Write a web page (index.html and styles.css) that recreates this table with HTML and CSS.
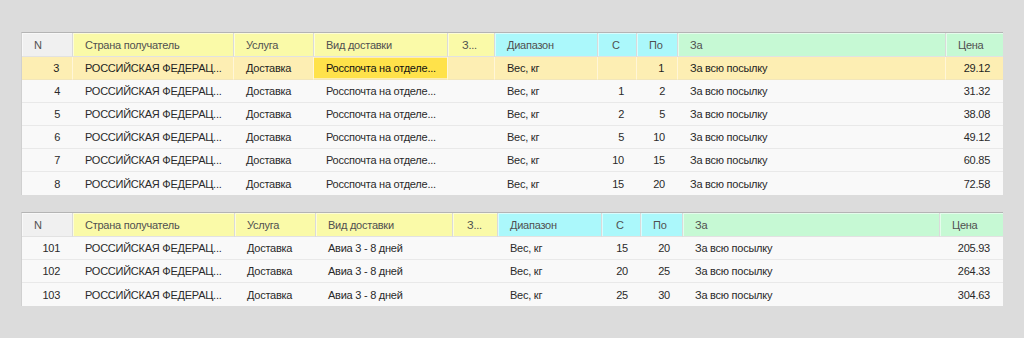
FILE: index.html
```html
<!DOCTYPE html>
<html lang="ru">
<head>
<meta charset="utf-8">
<title>Тарифы</title>
<link rel="stylesheet" href="styles.css">
</head>
<body>
<div class="page">
  <table class="grid">
    <colgroup>
      <col style="width:51px"><col style="width:161px"><col style="width:80px"><col style="width:134px"><col style="width:47px"><col style="width:103px"><col style="width:39px"><col style="width:41px"><col style="width:268px"><col style="width:57px">
    </colgroup>
    <thead>
      <tr>
        <th class="h-grey">N</th>
        <th class="h-yellow">Страна получатель</th>
        <th class="h-yellow">Услуга</th>
        <th class="h-yellow">Вид доставки</th>
        <th class="h-yellow h-short">З...</th>
        <th class="h-cyan">Диапазон</th>
        <th class="h-cyan h-short">С</th>
        <th class="h-cyan">По</th>
        <th class="h-green">За</th>
        <th class="h-green">Цена</th>
      </tr>
    </thead>
    <tbody>
      <tr class="current">
        <td class="num">3</td><td>РОССИЙСКАЯ ФЕДЕРАЦ...</td><td>Доставка</td><td class="focus">Росспочта на отделе...</td><td></td><td>Вес, кг</td><td class="num"></td><td class="num">1</td><td>За всю посылку</td><td class="num">29.12</td>
      </tr>
      <tr>
        <td class="num">4</td><td>РОССИЙСКАЯ ФЕДЕРАЦ...</td><td>Доставка</td><td>Росспочта на отделе...</td><td></td><td>Вес, кг</td><td class="num">1</td><td class="num">2</td><td>За всю посылку</td><td class="num">31.32</td>
      </tr>
      <tr>
        <td class="num">5</td><td>РОССИЙСКАЯ ФЕДЕРАЦ...</td><td>Доставка</td><td>Росспочта на отделе...</td><td></td><td>Вес, кг</td><td class="num">2</td><td class="num">5</td><td>За всю посылку</td><td class="num">38.08</td>
      </tr>
      <tr>
        <td class="num">6</td><td>РОССИЙСКАЯ ФЕДЕРАЦ...</td><td>Доставка</td><td>Росспочта на отделе...</td><td></td><td>Вес, кг</td><td class="num">5</td><td class="num">10</td><td>За всю посылку</td><td class="num">49.12</td>
      </tr>
      <tr>
        <td class="num">7</td><td>РОССИЙСКАЯ ФЕДЕРАЦ...</td><td>Доставка</td><td>Росспочта на отделе...</td><td></td><td>Вес, кг</td><td class="num">10</td><td class="num">15</td><td>За всю посылку</td><td class="num">60.85</td>
      </tr>
      <tr>
        <td class="num">8</td><td>РОССИЙСКАЯ ФЕДЕРАЦ...</td><td>Доставка</td><td>Росспочта на отделе...</td><td></td><td>Вес, кг</td><td class="num">15</td><td class="num">20</td><td>За всю посылку</td><td class="num">72.58</td>
      </tr>
    </tbody>
  </table>

  <table class="grid second">
    <colgroup>
      <col style="width:51px"><col style="width:162px"><col style="width:81px"><col style="width:137px"><col style="width:45px"><col style="width:104px"><col style="width:39px"><col style="width:42px"><col style="width:257px"><col style="width:63px">
    </colgroup>
    <thead>
      <tr>
        <th class="h-grey">N</th>
        <th class="h-yellow">Страна получатель</th>
        <th class="h-yellow">Услуга</th>
        <th class="h-yellow">Вид доставки</th>
        <th class="h-yellow h-short">З...</th>
        <th class="h-cyan">Диапазон</th>
        <th class="h-cyan h-short">С</th>
        <th class="h-cyan">По</th>
        <th class="h-green">За</th>
        <th class="h-green">Цена</th>
      </tr>
    </thead>
    <tbody>
      <tr>
        <td class="num">101</td><td>РОССИЙСКАЯ ФЕДЕРАЦ...</td><td>Доставка</td><td>Авиа 3 - 8 дней</td><td></td><td>Вес, кг</td><td class="num">15</td><td class="num">20</td><td>За всю посылку</td><td class="num">205.93</td>
      </tr>
      <tr>
        <td class="num">102</td><td>РОССИЙСКАЯ ФЕДЕРАЦ...</td><td>Доставка</td><td>Авиа 3 - 8 дней</td><td></td><td>Вес, кг</td><td class="num">20</td><td class="num">25</td><td>За всю посылку</td><td class="num">264.33</td>
      </tr>
      <tr>
        <td class="num">103</td><td>РОССИЙСКАЯ ФЕДЕРАЦ...</td><td>Доставка</td><td>Авиа 3 - 8 дней</td><td></td><td>Вес, кг</td><td class="num">25</td><td class="num">30</td><td>За всю посылку</td><td class="num">304.63</td>
      </tr>
    </tbody>
  </table>
</div>
</body>
</html>
```

FILE: styles.css
```css
html, body {
  margin: 0;
  padding: 0;
  background: #dcdcdc;
}

body {
  font-family: "Liberation Sans", Arial, sans-serif;
  font-size: 11px;
  letter-spacing: -0.25px;
  color: #2a2a2a;
}

.page {
  padding: 32px 22px 0 21px;
  display: flex;
  flex-direction: column;
  gap: 17px;
  align-items: flex-start;
}

.grid {
  width: 981px;
  table-layout: fixed;
  border-collapse: separate;
  border-spacing: 0;
  background: #f9f9f9;
  border-top: 1px solid #b4b4b4;
  border-left: 1px solid #d0d0d0;
}

.grid th,
.grid td {
  white-space: nowrap;
  overflow: hidden;
  text-align: left;
  padding: 0 6px 0 12px;
}

.grid th {
  height: 23px;
  font-weight: normal;
  color: #505050;
  border-right: 1px solid #dadada;
  border-bottom: 1px solid #e2e2e2;
  box-shadow: inset 1px 1px 0 rgba(255, 255, 255, 0.55);
}

.grid th:last-child {
  border-right: 0;
}

.h-grey { background: #f0f0f0; }
.h-yellow { background: #fafaa8; }
.h-cyan { background: #abf8fb; }
.h-green { background: #c6f9d4; }

.grid th.h-short { padding-left: 14px; }

.grid td {
  height: 22px;
  border-bottom: 1px solid #e9e9e9;
}

.grid tbody tr:last-child td {
  border-bottom: 0;
  height: 23px;
}

.grid td.num {
  text-align: right;
  padding: 0 13px 0 4px;
}

.grid tr.current td {
  background: #fdeeb3;
  color: #1e1e1e;
  border-right: 1px solid #fff6d8;
  border-bottom-color: #f2e6bb;
}

.grid tr.current td:last-child {
  border-right: 0;
}

.grid tr.current td.focus {
  background: #ffe24a;
  color: #111;
  box-shadow: inset 0 1px 0 #fdeeb3, inset 0 -1px 0 #fdeeb3;
}
```
